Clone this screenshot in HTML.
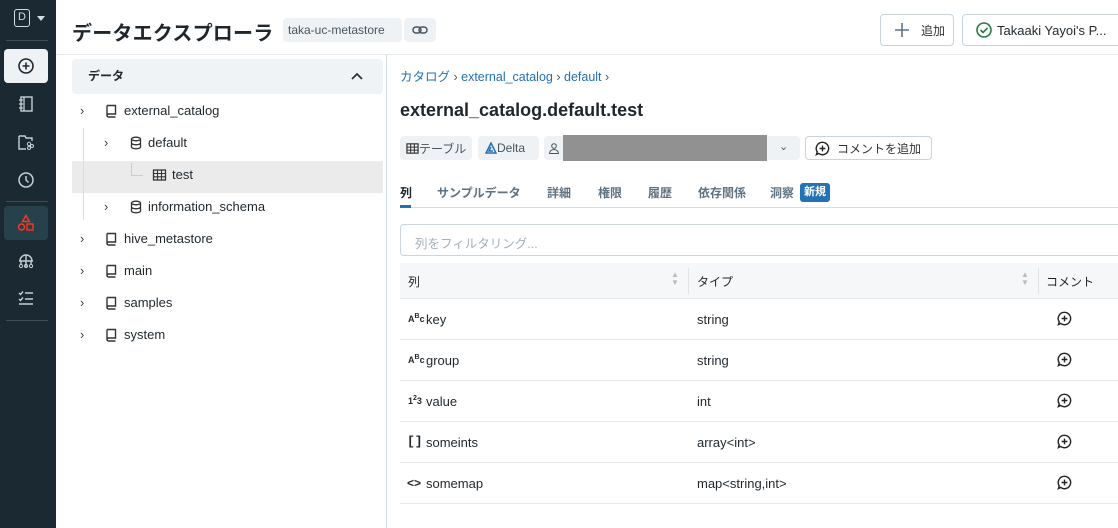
<!DOCTYPE html>
<html><head><meta charset="utf-8"><style>
*{box-sizing:border-box;margin:0;padding:0}
body{width:1118px;height:528px;overflow:hidden;font-family:"Liberation Sans","Noto Sans CJK JP",sans-serif;background:#fff;color:#1f272d;position:relative;font-size:13px}
.abs{position:absolute}
.side{left:0;top:0;width:56px;height:528px;background:#1b2a32}
.sb{position:absolute;left:4px;width:44px;height:34px;border-radius:4px;display:flex;align-items:center;justify-content:center}
.sep{position:absolute;left:6px;width:42px;height:1px;background:#3c4d57}
.chev{position:absolute;font-size:13px;color:#444}
.tab{position:absolute;top:184px;font-size:12px;font-weight:bold;color:#5f7281}
.row{position:absolute;left:400px;width:718px;height:41px;border-bottom:1px solid #e8ebee;font-size:13px}
.row span{position:absolute;top:13px}
.btn{position:absolute;border:1px solid #c8d3dc;border-radius:4px;background:#fff;display:flex;align-items:center}
.tag{position:absolute;top:136px;height:24px;background:#eff2f5;border-radius:4px;display:flex;align-items:center;font-size:12px;color:#445661}
</style></head><body>
<div class="abs side">
 <div class="abs" style="left:14px;top:9px;width:16px;height:18px;border:1.5px solid #d5dde2;border-radius:3px;color:#d5dde2;font-size:11px;text-align:center;line-height:15px">D</div>
 <div class="abs" style="left:37px;top:16px;border:4px solid transparent;border-top:5px solid #d5dde2"></div>
 <div class="sep" style="top:40px"></div>
 <div class="sb" style="top:49px;background:#eff2f5"><svg width="18" height="18" viewBox="0 0 18 18"><circle cx="9" cy="9" r="7" fill="none" stroke="#1b2a32" stroke-width="1.6"/><path d="M9 5.5v7M5.5 9h7" stroke="#1b2a32" stroke-width="1.6"/></svg></div>
 <div class="sb" style="top:87px"><svg width="16" height="18"><rect x="3" y="2" width="11" height="14" fill="none" stroke="#c5cfd5" stroke-width="1.4"/><path d="M6 2v14M1 5h4M1 9h4M1 13h4" stroke="#c5cfd5" stroke-width="1.3"/></svg></div>
 <div class="sb" style="top:125px"><svg width="18" height="18"><path d="M2 3h6l1 2h6v3M2 3v13h7" fill="none" stroke="#c5cfd5" stroke-width="1.4"/><circle cx="12" cy="11" r="1.7" fill="none" stroke="#c5cfd5"/><circle cx="12" cy="15" r="1.5" fill="none" stroke="#c5cfd5"/><circle cx="15" cy="13" r="1.5" fill="none" stroke="#c5cfd5"/></svg></div>
 <div class="sb" style="top:163px"><svg width="18" height="18"><circle cx="9" cy="9" r="7" fill="none" stroke="#c5cfd5" stroke-width="1.5"/><path d="M9 5v4l2.5 2.5" fill="none" stroke="#c5cfd5" stroke-width="1.5"/></svg></div>
 <div class="sep" style="top:201px"></div>
 <div class="sb" style="top:206px;background:#26404c"><svg width="18" height="18"><path d="M9 1.5l3.5 6h-7z" fill="none" stroke="#ff3621" stroke-width="1.4"/><circle cx="4.5" cy="13" r="3" fill="none" stroke="#ff3621" stroke-width="1.4"/><rect x="10" y="10" width="6" height="6" fill="none" stroke="#ff3621" stroke-width="1.4"/></svg></div>
 <div class="sb" style="top:244px"><svg width="18" height="18"><path d="M3 9a6 6 0 0 1 12 0M2 9h14M9 3v12M4 9v3M14 9v3" fill="none" stroke="#c5cfd5" stroke-width="1.4"/><circle cx="4" cy="14" r="1.6" fill="none" stroke="#c5cfd5"/><circle cx="9" cy="14" r="1.6" fill="none" stroke="#c5cfd5"/><circle cx="14" cy="14" r="1.6" fill="none" stroke="#c5cfd5"/></svg></div>
 <div class="sb" style="top:281px"><svg width="18" height="18"><path d="M2 4l1.5 1.5L6 2.5M8 4h8M2 10l1.5 1.5L6 8.5M8 10h8M2 15h14" fill="none" stroke="#c5cfd5" stroke-width="1.4"/></svg></div>
 <div class="sep" style="top:320px"></div>
</div>

<div class="abs" style="left:72px;top:17px;font-size:20px;font-weight:bold;color:#1f272d;letter-spacing:0.2px;white-space:nowrap">データエクスプローラ</div>
<div class="abs" style="left:283px;top:18px;width:119px;height:24px;background:#eff2f5;border-radius:4px;font-size:12px;color:#445661;line-height:24px;padding-left:5px">taka-uc-metastore</div>
<div class="abs" style="left:404px;top:18px;width:32px;height:24px;background:#eff2f5;border-radius:4px"><svg width="32" height="24"><rect x="9" y="9" width="8" height="6" rx="3" fill="none" stroke="#445661" stroke-width="1.5"/><rect x="15" y="9" width="8" height="6" rx="3" fill="none" stroke="#445661" stroke-width="1.5"/></svg></div>
<div class="btn" style="left:880px;top:14px;width:74px;height:32px"><svg width="40" height="30"><path d="M21 8v14M14 15h14" stroke="#5f7281" stroke-width="1.6"/></svg><span style="font-size:12px;color:#333">追加</span></div>
<div class="btn" style="left:962px;top:14px;width:170px;height:32px;padding-left:12px"><svg width="18" height="18"><circle cx="9" cy="9" r="7" fill="none" stroke="#277c43" stroke-width="1.6"/><path d="M5.5 9l2.5 2.5 4.5-4.5" fill="none" stroke="#277c43" stroke-width="1.6"/></svg><span style="font-size:13px;color:#1f272d;margin-left:4px">Takaaki Yayoi's P...</span></div>
<div class="abs" style="left:56px;top:54px;width:1062px;height:1px;background:#e4e8eb"></div>

<div class="abs" style="left:72px;top:59px;width:311px;height:35px;background:#f0f3f6;border-radius:4px"></div>
<div class="abs" style="left:88px;top:67px;font-size:12px;font-weight:bold">データ</div>
<svg class="abs" style="left:350px;top:71px" width="14" height="10"><path d="M2 8l5-5 5 5" fill="none" stroke="#333" stroke-width="1.8"/></svg>
<div class="abs" style="left:72px;top:161px;width:311px;height:32px;background:#ebebeb"></div>
<div class="abs" style="left:83px;top:128px;width:1px;height:92px;background:#ddd"></div>
<div class="abs" style="left:131px;top:163px;width:1px;height:12px;background:#ccc"></div>
<div class="abs" style="left:131px;top:175px;width:12px;height:1px;background:#ccc"></div>
<svg width="0" height="0" style="position:absolute"><defs>
<symbol id="cat" viewBox="0 0 14 14"><path d="M3 1.5h8.5v8.5H4.5a1.5 1.5 0 0 0 0 3h7M3 1.5v10.5" fill="none" stroke="#333" stroke-width="1.4"/></symbol>
<symbol id="db" viewBox="0 0 14 14"><ellipse cx="7" cy="3" rx="4.5" ry="1.8" fill="none" stroke="#333" stroke-width="1.3"/><path d="M2.5 3v8c0 1 2 1.8 4.5 1.8s4.5-.8 4.5-1.8V3M2.5 7c0 1 2 1.8 4.5 1.8s4.5-.8 4.5-1.8" fill="none" stroke="#333" stroke-width="1.3"/></symbol>
<symbol id="tb" viewBox="0 0 14 14"><rect x="1" y="2" width="12" height="10" fill="none" stroke="#333" stroke-width="1.3"/><path d="M1 5.5h12M1 8.8h12M5 2v10M9 2v10" stroke="#333" stroke-width="1.1"/></symbol>
<symbol id="cm" viewBox="0 0 14 14"><path d="M7 1.2a5.8 5.8 0 1 1-3.6 10.4L1.3 12.7l.8-2.5A5.8 5.8 0 0 1 7 1.2z" fill="none" stroke="#222" stroke-width="1.3"/><path d="M7 4.3v5.4M4.3 7h5.4" stroke="#222" stroke-width="1.3"/></symbol>
</defs></svg>
<div class="chev" style="left:80px;top:103px">›</div><svg class="abs" style="left:104px;top:104px" width="14" height="14"><use href="#cat"/></svg><div class="abs" style="left:124px;top:103px">external_catalog</div>
<div class="chev" style="left:104px;top:135px">›</div><svg class="abs" style="left:129px;top:136px" width="14" height="14"><use href="#db"/></svg><div class="abs" style="left:148px;top:135px">default</div>
<svg class="abs" style="left:152px;top:168px" width="15" height="14"><use href="#tb"/></svg><div class="abs" style="left:172px;top:167px">test</div>
<div class="chev" style="left:104px;top:199px">›</div><svg class="abs" style="left:129px;top:200px" width="14" height="14"><use href="#db"/></svg><div class="abs" style="left:148px;top:199px">information_schema</div>
<div class="chev" style="left:80px;top:231px">›</div><svg class="abs" style="left:104px;top:232px" width="14" height="14"><use href="#cat"/></svg><div class="abs" style="left:124px;top:231px">hive_metastore</div>
<div class="chev" style="left:80px;top:263px">›</div><svg class="abs" style="left:104px;top:264px" width="14" height="14"><use href="#cat"/></svg><div class="abs" style="left:124px;top:263px">main</div>
<div class="chev" style="left:80px;top:295px">›</div><svg class="abs" style="left:104px;top:296px" width="14" height="14"><use href="#cat"/></svg><div class="abs" style="left:124px;top:295px">samples</div>
<div class="chev" style="left:80px;top:327px">›</div><svg class="abs" style="left:104px;top:328px" width="14" height="14"><use href="#cat"/></svg><div class="abs" style="left:124px;top:327px">system</div>

<div class="abs" style="left:386px;top:55px;width:1px;height:473px;background:#d5dde4"></div>
<div class="abs" style="left:400px;top:66px;font-size:12.5px;color:#2272b4">カタログ <span style="color:#555">›</span> external_catalog <span style="color:#555">›</span> default <span style="color:#555">›</span></div>
<div class="abs" style="left:400px;top:100px;font-size:18px;font-weight:bold">external_catalog.default.test</div>
<div class="tag" style="left:400px;width:72px;padding-left:6px"><svg width="13" height="13"><use href="#tb"/></svg>テーブル</div>
<div class="tag" style="left:478px;width:61px;padding-left:7px;color:#445661"><svg width="12" height="12"><path d="M6 1L1 11h10z M6 5l-2 4h4" fill="none" stroke="#2272b4" stroke-width="1.5"/></svg>Delta</div>
<div class="tag" style="left:544px;width:256px;padding-left:4px"><svg width="12" height="12"><circle cx="6" cy="4" r="2.3" fill="none" stroke="#445661"/><path d="M1.5 11.5a4.5 4 0 0 1 9 0z" fill="none" stroke="#445661"/></svg></div>
<div class="abs" style="left:563px;top:135px;width:204px;height:26px;background:#919191"></div>
<div class="abs" style="left:779px;top:140px;font-size:11px;color:#555">⌄</div>
<div class="btn" style="left:805px;top:136px;width:127px;height:24px;padding-left:9px"><svg width="15" height="15"><use href="#cm"/></svg><span style="font-size:12px;color:#333;margin-left:7px">コメントを追加</span></div>

<div class="tab" style="left:400px;color:#1f272d">列</div>
<div class="tab" style="left:437px">サンプルデータ</div>
<div class="tab" style="left:547px">詳細</div>
<div class="tab" style="left:598px">権限</div>
<div class="tab" style="left:648px">履歴</div>
<div class="tab" style="left:698px">依存関係</div>
<div class="tab" style="left:770px">洞察</div>
<div class="abs" style="left:800px;top:183px;width:30px;height:19px;background:#2272b4;border-radius:3px;color:#fff;font-size:11px;font-weight:bold;text-align:center;line-height:19px">新規</div>
<div class="abs" style="left:400px;top:207px;width:718px;height:1px;background:#d5dde4"></div>
<div class="abs" style="left:400px;top:205px;width:11px;height:3px;background:#2272b4"></div>

<div class="abs" style="left:400px;top:224px;width:730px;height:32px;border:1px solid #cbd5de;border-radius:4px;font-size:12.5px;color:#a6b0b8;padding:8px 0 0 14px">列をフィルタリング...</div>
<div class="abs" style="left:400px;top:263px;width:718px;height:36px;background:#f6f7f9;border-bottom:1px solid #e8ebee;font-size:12px"></div>
<div class="abs" style="left:408px;top:273px;font-size:12px">列</div>
<div class="abs" style="left:697px;top:273px;font-size:12px">タイプ</div>
<div class="abs" style="left:1046px;top:273px;font-size:12px">コメント</div>
<div class="abs" style="left:671px;top:271px;font-size:8px;color:#bbb;line-height:8px">▲<br>▼</div>
<div class="abs" style="left:1021px;top:271px;font-size:8px;color:#bbb;line-height:8px">▲<br>▼</div>
<div class="abs" style="left:688px;top:268px;width:1px;height:26px;background:#e0e4e8"></div>
<div class="abs" style="left:1038px;top:268px;width:1px;height:26px;background:#e0e4e8"></div>

<div class="row" style="top:299px"><span style="left:8px;font-size:9px;font-weight:bold;top:14px">A<sup style="font-size:7px">B</sup>c</span><span style="left:26px">key</span><span style="left:297px">string</span><svg style="position:absolute;left:657px;top:12px" width="15" height="15"><use href="#cm"/></svg></div>
<div class="row" style="top:340px"><span style="left:8px;font-size:9px;font-weight:bold;top:14px">A<sup style="font-size:7px">B</sup>c</span><span style="left:26px">group</span><span style="left:297px">string</span><svg style="position:absolute;left:657px;top:12px" width="15" height="15"><use href="#cm"/></svg></div>
<div class="row" style="top:381px"><span style="left:8px;font-size:9px;font-weight:bold;top:14px">1<sup style="font-size:7px">2</sup>3</span><span style="left:26px">value</span><span style="left:297px">int</span><svg style="position:absolute;left:657px;top:12px" width="15" height="15"><use href="#cm"/></svg></div>
<div class="row" style="top:422px"><span style="left:7px;font-weight:bold;font-family:'Liberation Mono',monospace;top:12px">[]</span><span style="left:26px">someints</span><span style="left:297px">array&lt;int&gt;</span><svg style="position:absolute;left:657px;top:12px" width="15" height="15"><use href="#cm"/></svg></div>
<div class="row" style="top:463px"><span style="left:7px;font-weight:bold;font-size:12px">&lt;&gt;</span><span style="left:26px">somemap</span><span style="left:297px">map&lt;string,int&gt;</span><svg style="position:absolute;left:657px;top:12px" width="15" height="15"><use href="#cm"/></svg></div>
</body></html>
